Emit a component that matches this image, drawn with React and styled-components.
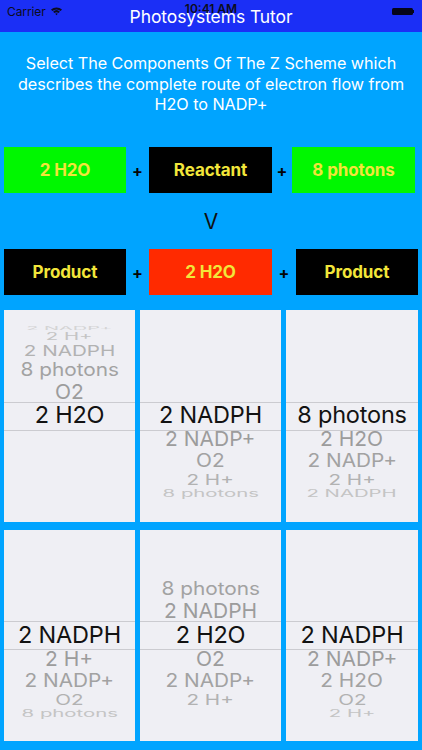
import React from "react";
import styled, { createGlobalStyle } from "styled-components";

const Global = createGlobalStyle`
  html, body { margin: 0; padding: 0; }
  body {
    background: #00a4ff;
    font-family: Inter, "Noto Sans", "Liberation Sans", sans-serif;
    width: 422px;
    overflow: hidden;
  }
`;

const Page = styled.div`
  width: 422px;
  height: 750px;
  background: #00a4ff;
  display: flex;
  flex-direction: column;
`;

const NavBar = styled.div`
  position: relative;
  height: 32px;
  background: #1b2ff6;
  display: flex;
  align-items: center;
  justify-content: center;
`;

const Title = styled.div`
  color: #ffffff;
  font-size: 17.5px;
  font-weight: 400;
  margin-top: 1px;
  letter-spacing: -0.1px;
`;

const StatusBar = styled.div`
  position: absolute;
  left: 0;
  right: 0;
  top: 0;
  height: 14px;
  display: flex;
  align-items: center;
  justify-content: space-between;
  padding: 0 6px 0 7px;
  font-size: 12px;
  color: #0c0c20;
`;

const Carrier = styled.div`
  display: flex;
  align-items: center;
  gap: 4px;
  margin-top: 8px;
  letter-spacing: -0.1px;
`;

const Clock = styled.div`
  position: absolute;
  left: 0;
  right: 0;
  top: 1px;
  text-align: center;
  font-weight: 600;
  font-size: 12px;
  color: #0c0c20;
`;

const Battery = styled.div`
  display: flex;
  align-items: center;
  margin-top: 8px;
  margin-right: 2px;
`;

const BatteryBody = styled.div`
  width: 21px;
  height: 7px;
  background: #05051a;
  border-radius: 1.5px;
`;

const BatteryNub = styled.div`
  width: 1.5px;
  height: 3px;
  background: #05051a;
`;

const Instruction = styled.div`
  margin-top: 21px;
  color: #ffffff;
  text-align: center;
  font-size: 16.2px;
  line-height: 20.5px;
  letter-spacing: -0.05px;
`;

const EquationRow = styled.div`
  display: flex;
  align-items: center;
  padding-left: 4px;
  margin-top: ${(p) => p.$top}px;
  height: 46px;
`;

const Box = styled.div`
  width: ${(p) => p.$w}px;
  height: 46px;
  background: ${(p) => p.$bg};
  color: #f2e63a;
  font-weight: 700;
  font-size: 17px;
  display: flex;
  align-items: center;
  justify-content: center;
  letter-spacing: -0.1px;
`;

const Plus = styled.div`
  width: ${(p) => p.$w}px;
  text-align: center;
  font-weight: 700;
  font-size: 16px;
  color: #050505;
  margin-top: 2px;
`;

const Arrow = styled.div`
  height: 56px;
  display: flex;
  align-items: center;
  justify-content: center;
  font-size: 21px;
  color: #101010;
  padding-top: 2px;
  box-sizing: border-box;
`;

const PickerRow = styled.div`
  display: grid;
  grid-template-columns: 131px 141px 132px;
  column-gap: 5px;
  padding-left: 4px;
  margin-top: ${(p) => p.$top}px;
`;

const Wheel = styled.div`
  position: relative;
  height: ${(p) => p.$h}px;
  background: #efeff4;
  overflow: hidden;
  display: flex;
  flex-direction: column;
  justify-content: center;
`;

const SelectionBand = styled.div`
  position: absolute;
  left: 0;
  right: 0;
  top: 50%;
  height: 27px;
  margin-top: -14px;
  border-top: 1px solid #cbcbd0;
  border-bottom: 1px solid #cbcbd0;
  pointer-events: none;
`;

const Slot = styled.div`
  flex: none;
  display: flex;
  align-items: center;
  justify-content: center;
  overflow: visible;
`;

const SHADES = ["#121212", "#9c9c9c", "#a2a2a2", "#b2b2b2", "#c4c4c4", "#d4d4d4"];

const Label = styled.div`
  white-space: nowrap;
  font-size: ${(p) => (p.$dist === 0 ? 23.5 : 21)}px;
  line-height: 24px;
  color: ${(p) => SHADES[p.$dist]};
  letter-spacing: ${(p) => (p.$dist === 0 ? "-0.2px" : "0px")};
`;

const R = 90;
const STEP = 15.5;
const rad = (d) => (d * Math.PI) / 180;
const clampAngle = (a) => Math.max(-90, Math.min(90, a));
const edge = (j) => R * Math.sin(rad(clampAngle(j * STEP)));

function Picker({ items, selected, height }) {
  const slots = [];
  for (let k = -5; k <= 5; k++) {
    const h = edge(k + 0.5) - edge(k - 0.5);
    const idx = selected + k;
    const text = idx >= 0 && idx < items.length ? items[idx] : null;
    const dist = Math.abs(k);
    const c = Math.cos(rad(k * STEP));
    const sx = 0.94 + 0.06 * c;
    slots.push(
      <Slot key={k} style={{ height: `${h}px` }}>
        {text && (
          <Label $dist={dist} style={{ transform: `scale(${sx}, ${c})` }}>
            {text}
          </Label>
        )}
      </Slot>
    );
  }
  return (
    <Wheel $h={height}>
      {slots}
      <SelectionBand />
    </Wheel>
  );
}

const Wifi = () => (
  <svg width="13" height="10" viewBox="0 0 13 10">
    <path d="M1 3.6 A8 8 0 0 1 12 3.6 L10.6 5 A6 6 0 0 0 2.4 5 Z" fill="#0c0c20" />
    <path d="M3.1 5.7 A5 5 0 0 1 9.9 5.7 L8.5 7.1 A3 3 0 0 0 4.5 7.1 Z" fill="#0c0c20" />
    <path d="M5.2 7.8 A2 2 0 0 1 7.8 7.8 L6.5 9.2 Z" fill="#0c0c20" />
  </svg>
);

const top = [
  { items: ["2 NADP+", "2 H+", "2 NADPH", "8 photons", "O2", "2 H2O"], selected: 5 },
  { items: ["2 NADPH", "2 NADP+", "O2", "2 H+", "8 photons"], selected: 0 },
  { items: ["8 photons", "2 H2O", "2 NADP+", "2 H+", "2 NADPH"], selected: 0 },
];
const bottom = [
  { items: ["2 NADPH", "2 H+", "2 NADP+", "O2", "8 photons"], selected: 0 },
  { items: ["8 photons", "2 NADPH", "2 H2O", "O2", "2 NADP+", "2 H+"], selected: 2 },
  { items: ["2 NADPH", "2 NADP+", "2 H2O", "O2", "2 H+"], selected: 0 },
];

export default function App() {
  return (
    <>
      <Global />
      <Page>
        <NavBar>
          <Title>Photosystems Tutor</Title>
          <StatusBar>
            <Carrier>
              Carrier <Wifi />
            </Carrier>
            <Battery>
              <BatteryBody />
              <BatteryNub />
            </Battery>
          </StatusBar>
          <Clock>10:41 AM</Clock>
        </NavBar>

        <Instruction>
          Select The Components Of The Z Scheme which
          <br />
          describes the complete route of electron flow from
          <br />
          H2O to NADP+
        </Instruction>

        <EquationRow $top={32}>
          <Box $w={122} $bg="#00f700">2 H2O</Box>
          <Plus $w={23}>+</Plus>
          <Box $w={123} $bg="#000000">Reactant</Box>
          <Plus $w={20}>+</Plus>
          <Box $w={123} $bg="#00f700">8 photons</Box>
        </EquationRow>

        <Arrow>V</Arrow>

        <EquationRow $top={0}>
          <Box $w={122} $bg="#000000">Product</Box>
          <Plus $w={23}>+</Plus>
          <Box $w={123} $bg="#ff2a00">2 H2O</Box>
          <Plus $w={24}>+</Plus>
          <Box $w={122} $bg="#000000">Product</Box>
        </EquationRow>

        <PickerRow $top={15}>
          {top.map((p, i) => (
            <Picker key={i} items={p.items} selected={p.selected} height={212} />
          ))}
        </PickerRow>

        <PickerRow $top={8}>
          {bottom.map((p, i) => (
            <Picker key={i} items={p.items} selected={p.selected} height={211} />
          ))}
        </PickerRow>
      </Page>
    </>
  );
}
